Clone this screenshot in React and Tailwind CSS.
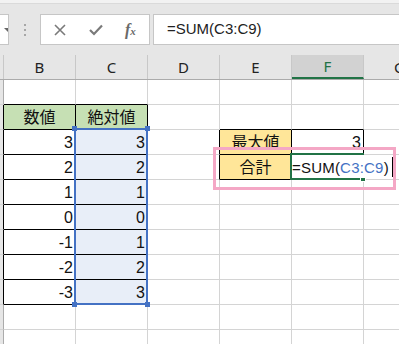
import React from 'react';

const COLS = ['B', 'C', 'D', 'E', 'F', 'G'];
const W = ['w-[72px]', 'w-[72px]', 'w-[72px]', 'w-[72px]', 'w-[72px]', 'w-[72px]'];

// rows 1..11 ; cell = { t, align, bg }
const rows = [
  {},
  { B: { t: '数値', a: 'c', bg: 'bg-[#c6e0b4]' }, C: { t: '絶対値', a: 'c', bg: 'bg-[#c6e0b4]' } },
  { B: { t: '3' }, C: { t: '3' }, E: { t: '最大値', a: 'c', bg: 'bg-[#ffe699]' }, F: { t: '3' } },
  { B: { t: '2' }, C: { t: '2' }, E: { t: '合計', a: 'c', bg: 'bg-[#ffe699]' } },
  { B: { t: '1' }, C: { t: '1' } },
  { B: { t: '0' }, C: { t: '0' } },
  { B: { t: '-1' }, C: { t: '1' } },
  { B: { t: '-2' }, C: { t: '2' } },
  { B: { t: '-3' }, C: { t: '3' } },
  {},
  {},
];

// bordered tables: [colStart, colEnd, rowStart, rowEnd] (0-based col in COLS, 1-based rows)
const tables = [
  [0, 1, 2, 9],
  [3, 4, 3, 4],
];

const inTable = (c, r) => tables.some(([c0, c1, r0, r1]) => c >= c0 && c <= c1 && r >= r0 && r <= r1);

function Cell({ c, r }) {
  const data = rows[r - 1][COLS[c]] || {};
  const selected = c === 1 && r >= 3 && r <= 9;
  const blackR = inTable(c, r) || inTable(c + 1, r);
  const blackB = inTable(c, r) || inTable(c, r + 1);
  const bg = data.bg || (selected ? 'bg-[#e8eef8]' : 'bg-white');
  return (
    <div
      className={`${W[c]} shrink-0 h-[25px] border-r border-b ${blackR ? 'border-r-black' : 'border-r-[#d4d4d4]'} ${
        blackB ? 'border-b-black' : 'border-b-[#d4d4d4]'
      } ${bg} flex items-center ${data.a === 'c' ? 'justify-center' : 'justify-end pr-[2px]'} text-[16px] text-[#111] leading-none pt-[1px]`}
    >
      {data.t}
    </div>
  );
}

export default function App() {
  return (
    <div
      className="relative w-[399px] h-[344px] overflow-hidden bg-white"
      style={{ fontFamily: '"Liberation Sans", "Noto Sans CJK JP", sans-serif' }}
    >
      {/* formula bar area */}
      <div className="h-[55px] bg-[#e6e6e6] flex flex-col">
        <div className="h-[4px] bg-[#f2f2f2] border-b border-[#dadada]" />
        <div className="flex items-stretch mt-[10px] h-[31px]">
          <div className="w-[9px] bg-white border border-l-0 border-[#c6c6c6] flex items-center justify-end overflow-hidden">
            <svg width="8" height="6" viewBox="0 0 8 6" className="-mr-[4px]">
              <path d="M0 1 L4 5 L8 1 Z" fill="#666" />
            </svg>
          </div>
          <div className="w-[31px] flex flex-col items-center justify-center gap-[3px]">
            <span className="w-[2px] h-[2px] bg-[#a6a6a6]" />
            <span className="w-[2px] h-[2px] bg-[#a6a6a6]" />
            <span className="w-[2px] h-[2px] bg-[#a6a6a6]" />
          </div>
          <div className="w-[110px] bg-white border border-[#c6c6c6] flex items-center">
            <svg width="12" height="12" viewBox="0 0 12 12" className="ml-[13px]">
              <path d="M1 1 L11 11 M11 1 L1 11" stroke="#7a7a7a" strokeWidth="1.6" />
            </svg>
            <svg width="14" height="12" viewBox="0 0 14 12" className="ml-[23px]">
              <path d="M1 6 L5 10 L13 1.5" stroke="#7a7a7a" strokeWidth="2.2" fill="none" />
            </svg>
            <span
              className="ml-[22px] text-[16px] italic font-bold text-[#6a6a6a] leading-none"
              style={{ fontFamily: '"Liberation Serif", serif' }}
            >
              f<span className="text-[11px]">x</span>
            </span>
          </div>
          <div className="ml-[3px] flex-1 bg-white border border-r-0 border-[#c6c6c6] flex items-center pl-[13px] text-[15px] text-[#222]">
            =SUM(C3:C9)
          </div>
        </div>
      </div>

      {/* column headers */}
      <div className="flex h-[25px] bg-[#e6e6e6] border-b border-[#ababab] text-[15px] text-[#222]" style={{ fontFamily: '"Noto Sans", sans-serif' }}>
        <div className="w-[4px] shrink-0 border-r border-[#c8c8c8]" />
        {COLS.map((col, i) => (
          <div
            key={col}
            className={`${W[i]} shrink-0 flex items-center justify-center border-r border-[#c8c8c8] ${
              col === 'F' ? 'bg-[#d2d2d2] text-[#217346] border-b-2 border-b-[#217346]' : ''
            }`}
          >
            {col}
          </div>
        ))}
      </div>

      {/* grid */}
      {rows.map((_, ri) => {
        const r = ri + 1;
        const headBlack = inTable(0, r);
        return (
          <div key={r} className="flex">
            <div className={`w-[4px] shrink-0 h-[25px] bg-[#e6e6e6] border-r border-b border-b-[#d4d4d4] ${headBlack ? 'border-r-black' : 'border-r-[#ababab]'}`} />
            {COLS.map((_, c) => (
              <Cell key={c} c={c} r={r} />
            ))}
          </div>
        );
      })}

      {/* reference range highlight C3:C9 */}
      <div className="absolute left-[74px] top-[128px] w-[74px] h-[177px] border-2 border-[#4472c4]" />
      <div className="absolute left-[72px] top-[126px] w-[5px] h-[5px] bg-[#4472c4]" />
      <div className="absolute left-[145px] top-[126px] w-[5px] h-[5px] bg-[#4472c4]" />
      <div className="absolute left-[72px] top-[302px] w-[5px] h-[5px] bg-[#4472c4]" />
      <div className="absolute left-[145px] top-[302px] w-[5px] h-[5px] bg-[#4472c4]" />

      {/* active cell F4 in edit mode */}
      <div className="absolute left-[290px] top-[153px] w-[74px] h-[27px] border-2 border-r-0 border-[#217346]" />
      <div className="absolute left-[292px] top-[155px] w-[101px] h-[23px] bg-white flex items-center text-[15px] text-[#111] leading-none pt-[1px] tracking-[0.2px]">
        <span>=SUM(</span>
        <span className="text-[#4472c4]">C3:C9</span>
        <span>)</span>
        <span className="ml-[3px] w-[1px] h-[20px] bg-black" />
      </div>
      <div className="absolute left-[360px] top-[177px] w-[6px] h-[5px] bg-[#217346] border border-white" />

      {/* pink annotation */}
      <div className="absolute left-[213px] top-[147px] w-[183px] h-[43px] border-[3px] border-[#f4a7c5]" />
    </div>
  );
}
